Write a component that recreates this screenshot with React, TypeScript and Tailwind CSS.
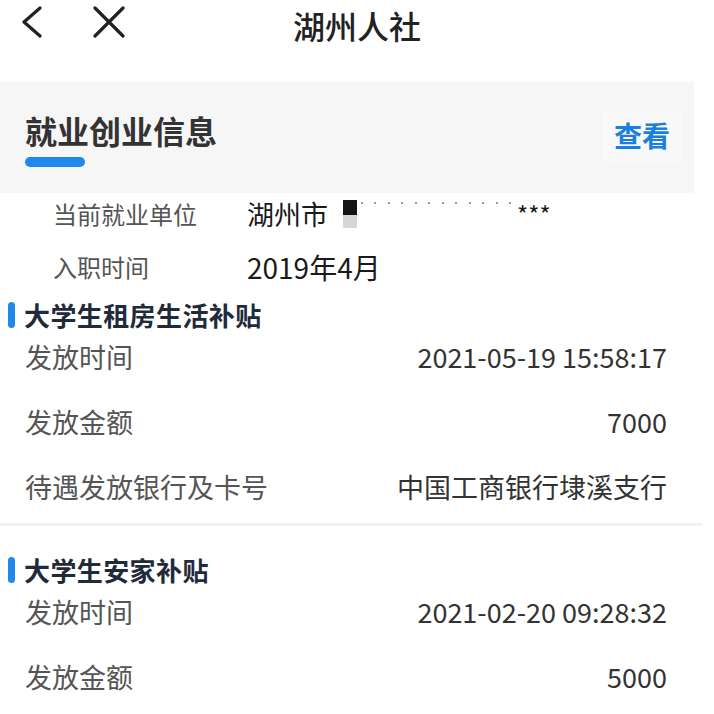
import React from "react";

/* 湖州人社 — 就业创业信息 detail page */

interface PayRow {
  label: string;
  value: string;
}

interface Subsidy {
  title: string;
  rows: PayRow[];
}

const SUBSIDIES: Subsidy[] = [
  {
    title: "大学生租房生活补贴",
    rows: [
      { label: "发放时间", value: "2021-05-19 15:58:17" },
      { label: "发放金额", value: "7000" },
      { label: "待遇发放银行及卡号", value: "中国工商银行埭溪支行" },
    ],
  },
  {
    title: "大学生安家补贴",
    rows: [
      { label: "发放时间", value: "2021-02-20 09:28:32" },
      { label: "发放金额", value: "5000" },
    ],
  },
];

function BackIcon() {
  return (
    <svg width="22" height="32" viewBox="0 0 22 32" fill="none">
      <path d="M19 2 L3 16 L19 30" stroke="#222" strokeWidth="3.2" strokeLinecap="round" strokeLinejoin="round" />
    </svg>
  );
}

function CloseIcon() {
  return (
    <svg width="34" height="32" viewBox="0 0 34 32" fill="none">
      <path d="M3 2 L31 30 M31 2 L3 30" stroke="#222" strokeWidth="3.2" strokeLinecap="round" />
    </svg>
  );
}

function SectionTitle({ title }: { title: string }) {
  return (
    <div className="flex h-[26px] items-center">
      <div className="ml-[8px] h-[26px] w-[7px] rounded-full bg-[#1e88ef]" />
      <div className="ml-[9px] text-[26px] leading-none font-bold tracking-[0.4px] text-[#1f2b3a]">{title}</div>
    </div>
  );
}

export default function App() {
  return (
    <div className="w-[714px] h-[714px] overflow-hidden bg-white font-['Noto_Sans_CJK_SC','Noto_Sans',sans-serif]">
      {/* Nav bar */}
      <div className="grid h-[82px] grid-cols-[1fr_auto_1fr] items-start pt-[6px]">
        <div className="flex items-center gap-[49px] pl-[21px]">
          <BackIcon />
          <CloseIcon />
        </div>
        <div className="text-[32px] leading-[38px] font-medium text-[#222]">湖州人社</div>
        <div />
      </div>

      {/* Card header */}
      <div className="flex h-[111px] w-[694px] items-start justify-between bg-[#f6f6f6] pr-[12px]">
        <div className="pl-[25px] pt-[32px]">
          <div className="text-[32px] leading-[32px] font-bold text-[#333]">就业创业信息</div>
          <div className="mt-[11px] h-[10px] w-[60px] rounded-full bg-[#1e88ef]" />
        </div>
        <div className="mt-[29px] flex h-[52px] items-center rounded-[6px] bg-[#f9f9f9] px-[12px] pb-[4px] text-[28px] font-bold text-[#1a7fe3]">
          查看
        </div>
      </div>

      {/* Employment info */}
      <div className="grid grid-cols-[194px_1fr] pl-[53px]">
        <div className="flex h-[42px] items-center text-[24px] text-[#555]">当前就业单位</div>
        <div className="flex h-[42px] items-center text-[27px] text-[#1a1a1a]">
          <span>湖州市</span>
          <span className="ml-[15px] flex flex-col">
            <span className="h-[15px] w-[14px] bg-[#151515]" />
            <span className="h-[13px] w-[14px] bg-[#d6d6d6]" />
          </span>
          <span className="mb-[22px] ml-[4px] flex w-[150px] justify-between">
            {Array.from({ length: 12 }).map((_, i) => (
              <span key={i} className="h-[2px] w-[2px] bg-[#999]" />
            ))}
          </span>
          <span className="ml-[6px] text-[24px] leading-none">***</span>
        </div>
        <div className="mt-[11px] flex h-[42px] items-center text-[24px] text-[#555]">入职时间</div>
        <div className="mt-[11px] flex h-[42px] items-center text-[28px] text-[#1a1a1a]">2019年4月</div>
      </div>

      {/* Subsidies */}
      {SUBSIDIES.map((s, idx) => (
        <div key={s.title} className={idx === 0 ? "mt-[14px]" : "mt-[31px]"}>
          <SectionTitle title={s.title} />
          <div className="pl-[25px] pr-[47px]">
            {s.rows.map((r) => (
              <div key={r.label} className="flex h-[65px] items-center justify-between pb-[6px] text-[27px]">
                <span className="text-[#555]">{r.label}</span>
                <span className="text-[#333]">{r.value}</span>
              </div>
            ))}
          </div>
          {idx === 0 && <div className="h-[3px] w-[702px] bg-[#f2f2f2]" />}
        </div>
      ))}
    </div>
  );
}
